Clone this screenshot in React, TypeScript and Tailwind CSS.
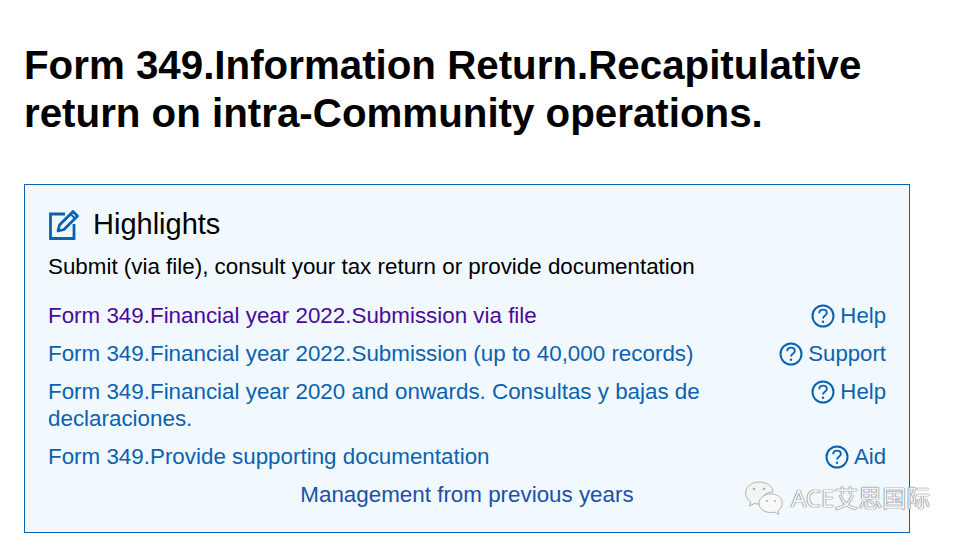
import React from 'react';

const LINKS = [
  { id: 1, label: 'Form 349.Financial year 2022.Submission via file', help: 'Help', visited: true },
  { id: 2, label: 'Form 349.Financial year 2022.Submission (up to 40,000 records)', help: 'Support' },
  { id: 3, label: 'Form 349.Financial year 2020 and onwards. Consultas y bajas de declaraciones.', help: 'Help' },
  { id: 4, label: 'Form 349.Provide supporting documentation', help: 'Aid' },
];

const HelpIcon = () => (
  <svg width="24" height="24" viewBox="0 0 24 24" fill="none" stroke="#0b62b0" strokeWidth="2" className="shrink-0">
    <circle cx="12" cy="12" r="10.5" />
    <path d="M8.200 9.200c0-2.200 1.700-3.600 3.800-3.600s3.800 1.300 3.800 3.300c0 2.800-3.800 2.800-3.800 5.600" strokeWidth="1.900" />
    <circle cx="12" cy="17.800" r="1.200" fill="#0b62b0" stroke="none" />
  </svg>
);

const EditIcon = () => (
  <svg width="32" height="32" viewBox="0 0 32 32" fill="none" stroke="#0b62b0" className="shrink-0">
    <path d="M17 6H2.500v24.500H26V16" strokeWidth="2.800" />
    <path d="M10 23l1.500-6L25 3.500l4.500 4.500L16 21.500z" strokeWidth="2.800" strokeLinejoin="round" />
    <path d="M22.500 6l4.500 4.500" strokeWidth="2" />
  </svg>
);

const Watermark = () => (
  <div className="absolute left-[744px] top-[480px] flex items-center gap-[7px] opacity-90">
    <svg width="40" height="36" viewBox="0 0 40 36">
      <path d="M15 2C7.500 2 1.500 7 1.500 13.200c0 3.600 2 6.600 5 8.700L5.500 26l5-2.600c1.500.4 3 .6 4.500.6l2-1c-1-6 5-11 12-11 0-5.500-6-10-14-10z" fill="#f4f4f4" stroke="#9b9b9b" strokeWidth="0.8" />
      <path d="M27 14c-6.500 0-12 4-12 9.300s5.500 9.300 12 9.300c1.300 0 2.700-.2 3.800-.6l4.200 2.500-1-3.800c2.600-1.700 4.300-4.400 4.300-7.400C38.300 18 33.500 14 27 14z" fill="#fafafa" stroke="#9b9b9b" strokeWidth="0.8" />
      <circle cx="10" cy="9" r="1.300" fill="#aaa" />
      <circle cx="20" cy="9" r="1.300" fill="#aaa" />
      <circle cx="23" cy="21" r="1.100" fill="#aaa" />
      <circle cx="31" cy="21" r="1.100" fill="#aaa" />
    </svg>
    <span className="text-[24px] leading-none whitespace-nowrap text-[#f5f5f5] [text-shadow:0_0_1px_#444,0_0_1px_#444] font-['Noto_Sans','Noto_Sans_CJK_SC',sans-serif]">
      ACE艾思国际
    </span>
  </div>
);

const App = () => {
  return (
    <div className="relative w-[961px] h-[542px] overflow-hidden bg-white px-6 pt-[42px] font-['Liberation_Sans',sans-serif] text-black">
      <h1 className="text-[40.3px] leading-[48px] font-bold w-[880px]">
        Form 349.Information Return.Recapitulative return on intra-Community operations.
      </h1>

      <div className="mt-[46px] w-[886px] h-[349px] border border-[#0b62b0] bg-[#f1f8fe] pl-[23px] pr-[23px] pt-[22px]">
        <div className="flex items-center gap-[13px] h-[34px]">
          <EditIcon />
          <h2 className="text-[29px] leading-[34px]">Highlights</h2>
        </div>
        <p className="mt-[12px] text-[22.38px] leading-[27px]">
          Submit (via file), consult your tax return or provide documentation
        </p>

        <ul className="mt-[22px] flex flex-col gap-[11px]">
          {LINKS.map((link) => (
            <li key={link.id} className="flex justify-between items-start text-[22.38px] leading-[27px]">
              <a className={`w-[680px] ${link.visited ? 'text-[#4b0a97]' : 'text-[#0b62b0]'}`}>{link.label}</a>
              <a className="flex items-center gap-[5px] text-[22.2px] text-[#0b62b0]">
                <HelpIcon />
                {link.help}
              </a>
            </li>
          ))}
        </ul>

        <div className="mt-[11px] text-center text-[22.38px] leading-[27px] text-[#1a50a8]">
          Management from previous years
        </div>
      </div>

      <Watermark />
    </div>
  );
};

export default App;
